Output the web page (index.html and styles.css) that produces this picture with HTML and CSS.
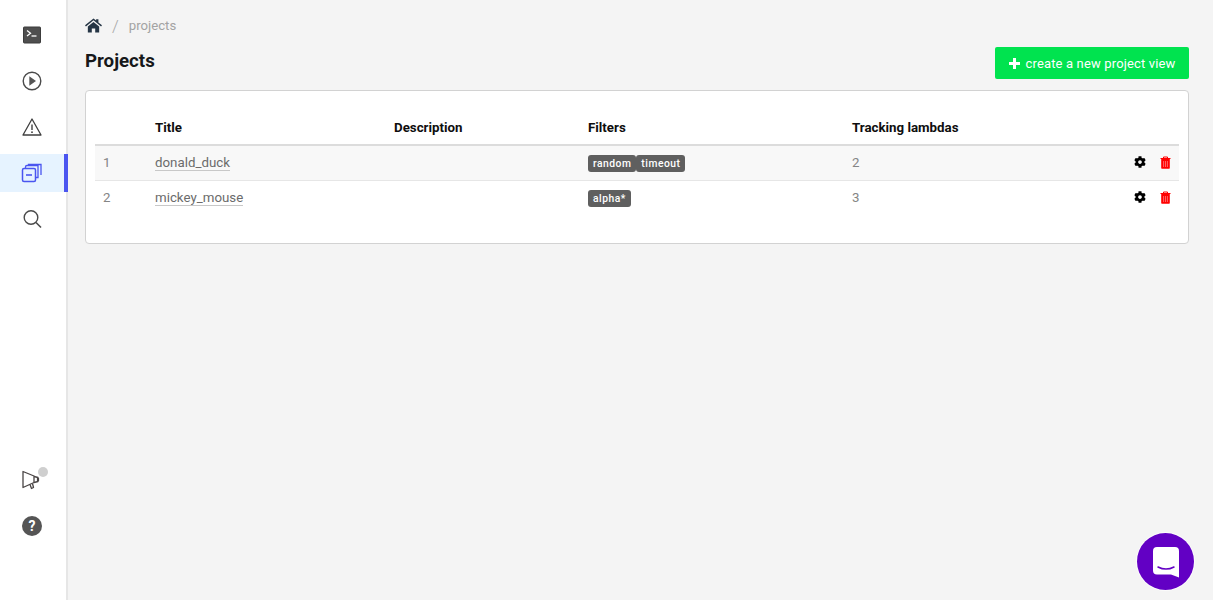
FILE: index.html
```html
<!DOCTYPE html>
<html lang="en">
<head>
<meta charset="utf-8">
<title>Projects</title>
<link rel="stylesheet" href="styles.css">
</head>
<body>
<div class="app">
  <nav class="sidebar">
    <div class="nav-group">
      <a class="nav-item">
        <svg width="20" height="20" viewBox="0 0 20 20"><rect x="1.5" y="2" width="17" height="16" rx=".8" fill="#4f4f4f" stroke="#3c3c3c"/><path d="M5 5.5 8.5 8.2 5 10.9" fill="none" stroke="#fff" stroke-width="1.3"/><path d="M9.5 11h5" stroke="#fff" stroke-width="1.3"/></svg>
      </a>
      <a class="nav-item">
        <svg width="22" height="22" viewBox="0 0 22 22"><circle cx="11" cy="11" r="8.8" fill="none" stroke="#4a4a4a" stroke-width="1.4"/><path d="M8.3 6.3 15 11l-6.7 4.7z" fill="#555"/></svg>
      </a>
      <a class="nav-item">
        <svg width="22" height="22" viewBox="0 0 22 22"><path d="M11 3 20 19H2z" fill="none" stroke="#3f3f3f" stroke-width="1.3" stroke-linejoin="round"/><path d="M11 8.5v5.5" stroke="#3f3f3f" stroke-width="1.4"/><circle cx="11" cy="16.2" r=".9" fill="#3f3f3f"/></svg>
      </a>
      <a class="nav-item active">
        <svg width="22" height="22" viewBox="0 0 22 22" fill="none" stroke="#4a55f0" stroke-width="1.3"><rect x="1.5" y="6.5" width="13" height="13" rx="1.5" stroke-width="1.5"/><path d="M5 13h6" stroke-width="1.6"/><path d="M4.5 6.5V5a1.5 1.5 0 0 1 1.500-1.500H17V15.500h-2.500"/><path d="M7.500 3.500V2.500H20V13"/></svg>
      </a>
      <a class="nav-item">
        <svg width="22" height="22" viewBox="0 0 22 22" fill="none" stroke="#4a4a4a"><circle cx="10" cy="9.500" r="6.800" stroke-width="1.400"/><path d="m15 14.500 5 5" stroke-width="1.600"/></svg>
      </a>
    </div>
    <div class="nav-group nav-bottom">
      <a class="nav-item">
        <svg width="22" height="22" viewBox="0 0 22 22" fill="none" stroke="#4a4545" stroke-width="1.300" stroke-linejoin="round"><path d="M2 2.500v16l11-5V7z"/><path d="M13 7.500 17 8.500v4l-4 1"/><path d="M9 15.500l1.500 4 2-1-1-4" /><path d="M17 9v3" stroke-width="2.200"/></svg>
        <span class="dot"></span>
      </a>
      <a class="nav-item">
        <span class="help">?</span>
      </a>
    </div>
  </nav>

  <main class="main">
    <div class="breadcrumb">
      <svg class="home" width="17" height="15" viewBox="0 0 18 15"><path d="M9 0 11.800 2.300V1h2.400v3.200L18 7.300l-1 1.200L9 2 1 8.500 0 7.300z" fill="#253545"/><path d="M3 8.600 9 3.700l6 4.900V15h-4.200v-4.200H7.200V15H3z" fill="#253545"/></svg>
      <span class="sep">/</span>
      <span class="crumb">projects</span>
    </div>
    <div class="head">
      <h1 class="title">Projects</h1>
      <button class="create"><span class="plus"></span>create a new project view</button>
    </div>
    <section class="card">
      <table class="table">
        <thead>
          <tr>
            <th class="c-num"></th>
            <th class="c-title">Title</th>
            <th class="c-desc">Description</th>
            <th class="c-filters">Filters</th>
            <th class="c-track">Tracking lambdas</th>
            <th></th>
          </tr>
        </thead>
        <tbody>
          <tr class="odd">
            <td>1</td>
            <td><a class="link">donald_duck</a></td>
            <td></td>
            <td><div class="tags"><span class="tag">random</span><span class="tag">timeout</span></div></td>
            <td>2</td>
            <td>
              <div class="actions">
                <svg width="12" height="12" viewBox="0 0 512 512"><path d="M487.400 315.700l-42.600-24.600c4.300-23.200 4.300-47 0-70.200l42.600-24.600c4.900-2.800 7.100-8.600 5.500-14-11.100-35.600-30-67.800-54.700-94.600-3.800-4.100-10-5.100-14.800-2.300L380.800 110c-17.900-15.400-38.500-27.300-60.800-35.100V25.800c0-5.600-3.900-10.500-9.400-11.700-36.700-8.200-74.300-7.800-109.200 0-5.500 1.200-9.400 6.100-9.400 11.700V75c-22.200 7.900-42.800 19.800-60.800 35.100L88.700 85.500c-4.900-2.800-11-1.900-14.800 2.300-24.700 26.700-43.600 58.900-54.700 94.600-1.700 5.400.6 11.200 5.500 14L67.300 221c-4.300 23.200-4.300 47 0 70.200l-42.600 24.600c-4.900 2.800-7.100 8.600-5.500 14 11.100 35.600 30 67.800 54.700 94.600 3.800 4.100 10 5.100 14.800 2.300l42.600-24.600c17.900 15.400 38.500 27.300 60.800 35.100v49.200c0 5.600 3.900 10.500 9.400 11.700 36.700 8.200 74.300 7.800 109.200 0 5.500-1.200 9.400-6.100 9.400-11.700v-49.200c22.200-7.900 42.800-19.800 60.800-35.100l42.600 24.600c4.900 2.800 11 1.900 14.800-2.300 24.700-26.700 43.600-58.900 54.700-94.600 1.500-5.500-.7-11.300-5.600-14.100zM256 336c-44.100 0-80-35.900-80-80s35.900-80 80-80 80 35.900 80 80-35.900 80-80 80z" fill="#000"/></svg>
                <svg width="11" height="13" viewBox="0 0 11 13"><path d="M.5 2.500h10M3.500 2.500V1h4v1.500" fill="none" stroke="#f00" stroke-width="1"/><path d="M1.200 3h8.600v9a.8.8 0 0 1-.8.800H2a.8.8 0 0 1-.8-.8z" fill="#f00"/><path d="M3.600 5v6M5.500 5v6M7.400 5v6" stroke="#ff8f8f" stroke-width=".7"/></svg>
              </div>
            </td>
          </tr>
          <tr>
            <td>2</td>
            <td><a class="link">mickey_mouse</a></td>
            <td></td>
            <td><div class="tags"><span class="tag">alpha*</span></div></td>
            <td>3</td>
            <td>
              <div class="actions">
                <svg width="12" height="12" viewBox="0 0 512 512"><path d="M487.400 315.700l-42.600-24.600c4.300-23.200 4.300-47 0-70.200l42.600-24.600c4.900-2.800 7.100-8.600 5.500-14-11.100-35.600-30-67.800-54.700-94.600-3.800-4.100-10-5.100-14.800-2.300L380.800 110c-17.900-15.400-38.500-27.300-60.800-35.100V25.800c0-5.600-3.900-10.500-9.400-11.700-36.700-8.200-74.300-7.800-109.200 0-5.500 1.200-9.400 6.100-9.400 11.700V75c-22.200 7.900-42.800 19.800-60.800 35.100L88.700 85.500c-4.900-2.800-11-1.900-14.800 2.300-24.700 26.700-43.600 58.900-54.700 94.600-1.700 5.400.6 11.200 5.500 14L67.300 221c-4.300 23.200-4.300 47 0 70.200l-42.600 24.600c-4.900 2.800-7.100 8.600-5.500 14 11.100 35.600 30 67.800 54.700 94.600 3.800 4.100 10 5.100 14.800 2.300l42.600-24.600c17.900 15.400 38.500 27.300 60.800 35.100v49.200c0 5.600 3.900 10.500 9.400 11.700 36.700 8.200 74.300 7.800 109.200 0 5.500-1.200 9.400-6.100 9.400-11.700v-49.200c22.200-7.900 42.800-19.800 60.800-35.100l42.600 24.600c4.900 2.800 11 1.900 14.800-2.300 24.700-26.700 43.600-58.900 54.700-94.600 1.500-5.500-.7-11.300-5.600-14.100zM256 336c-44.100 0-80-35.900-80-80s35.900-80 80-80 80 35.900 80 80-35.900 80-80 80z" fill="#000"/></svg>
                <svg width="11" height="13" viewBox="0 0 11 13"><path d="M.5 2.500h10M3.500 2.500V1h4v1.500" fill="none" stroke="#f00" stroke-width="1"/><path d="M1.200 3h8.600v9a.8.8 0 0 1-.8.800H2a.8.8 0 0 1-.8-.8z" fill="#f00"/><path d="M3.600 5v6M5.500 5v6M7.400 5v6" stroke="#ff8f8f" stroke-width=".7"/></svg>
              </div>
            </td>
          </tr>
        </tbody>
      </table>
    </section>
  </main>

  <button class="chat" aria-label="Chat">
    <svg width="26" height="31" viewBox="0 0 26 31"><path d="M4 0h18a4 4 0 0 1 4 4v26.500l-8-3H4a4 4 0 0 1-4-4V4a4 4 0 0 1 4-4z" fill="#fff"/><path d="M5 20c5 2.600 11 2.600 16 0" fill="none" stroke="#6200c4" stroke-width="1.500" stroke-linecap="round"/></svg>
  </button>
</div>
</body>
</html>
```

FILE: styles.css
```css
* { box-sizing: border-box; }
html, body { margin: 0; height: 100%; }
body {
  font-family: Roboto, "Liberation Sans", sans-serif;
  background: #f4f4f4;
  color: #858585;
  overflow: hidden;
}
.app { display: flex; height: 600px; }

.sidebar {
  width: 68px;
  flex: none;
  background: #fff;
  border-right: 2px solid #e6e6e6;
  display: flex;
  flex-direction: column;
  justify-content: space-between;
  padding: 16px 0 55px;
}
.nav-group { display: flex; flex-direction: column; gap: 8px; }
.nav-item {
  position: relative;
  height: 38px;
  display: flex;
  align-items: center;
  justify-content: center;
  padding-right: 2px;
}
.nav-item.active { background: #e6f3ff; }
.nav-item.active::after {
  content: "";
  position: absolute;
  top: 0;
  bottom: 0;
  right: -2px;
  width: 4px;
  background: #4a55f0;
}
.dot {
  position: absolute;
  top: 6px;
  left: 38px;
  width: 10px;
  height: 10px;
  border-radius: 50%;
  background: #cfcfcf;
}
.help {
  width: 20px;
  height: 20px;
  border-radius: 50%;
  background: #555;
  color: #fff;
  font-size: 14px;
  font-weight: 700;
  line-height: 20px;
  text-align: center;
}

.main { flex: 1; min-width: 0; padding: 16px 24px 0 17px; }
.breadcrumb { display: flex; align-items: center; height: 20px; }
.home { flex: none; margin-top: -1px; }
.sep { margin-left: 10px; color: #a8a8a8; font-size: 17px; font-weight: 300; }
.crumb { margin-left: 10px; margin-top: -1px; color: #a3a3a3; font-size: 13.200px; }

.head {
  display: flex;
  justify-content: space-between;
  align-items: flex-start;
  margin-top: 11px;
}
.title {
  margin: 0;
  font-size: 18.700px;
  line-height: 27px;
  font-weight: 700;
  color: #16181a;
  margin-top: 1px;
}
.create {
  height: 32px;
  width: 194px;
  display: flex;
  align-items: center;
  justify-content: center;
  gap: 6px;
  border: 0;
  border-radius: 2px;
  background: #00e34f;
  color: #fff;
  font: 400 13px Roboto, sans-serif;
  letter-spacing: .15px;
}
.plus {
  width: 11px;
  height: 11px;
  background:
    linear-gradient(#fff, #fff) center / 100% 3px no-repeat,
    linear-gradient(#fff, #fff) center / 3px 100% no-repeat;
}

.card {
  margin-top: 11px;
  height: 154px;
  background: #fff;
  border: 1px solid #d2d2d2;
  border-radius: 4px;
  padding: 19px 9px 0;
}
.table { width: 100%; border-collapse: collapse; table-layout: fixed; font-size: 13.300px; }
.table th {
  height: 35px;
  text-align: left;
  font-weight: 700;
  color: #0e0e0e;
  padding: 0 8px;
  border-bottom: 2px solid #dcdcdc;
}
.table td { height: 35px; padding: 0 8px; vertical-align: middle; }
.table .odd td { height: 35px; background: #f8f8f8; border-bottom: 1px solid #e6e6e6; }
.c-num { width: 52px; }
.c-title { width: 239px; }
.c-desc { width: 194px; }
.c-filters { width: 264px; }
.c-track { width: 250px; }

.link { color: #6b6b6b; border-bottom: 1px solid #c8c8c8; }
.tags { display: flex; padding-top: 2px; }
.tag {
  height: 17px;
  padding: 0 5px;
  background: #5f5f5f;
  border-radius: 3px;
  color: #fff;
  font-size: 10.300px;
  font-weight: 500;
  line-height: 17px;
  letter-spacing: .5px;
}
.actions { display: flex; justify-content: flex-end; align-items: center; gap: 14px; padding-bottom: 1px; }

.chat {
  position: fixed;
  right: 19px;
  bottom: 10px;
  width: 57px;
  height: 57px;
  border: 0;
  border-radius: 50%;
  padding: 2px 0 0 0;
  background: #6200c4;
  box-shadow: 0 0 0 1px rgba(255,255,255,.7);
  display: flex;
  align-items: center;
  justify-content: center;
}
```
